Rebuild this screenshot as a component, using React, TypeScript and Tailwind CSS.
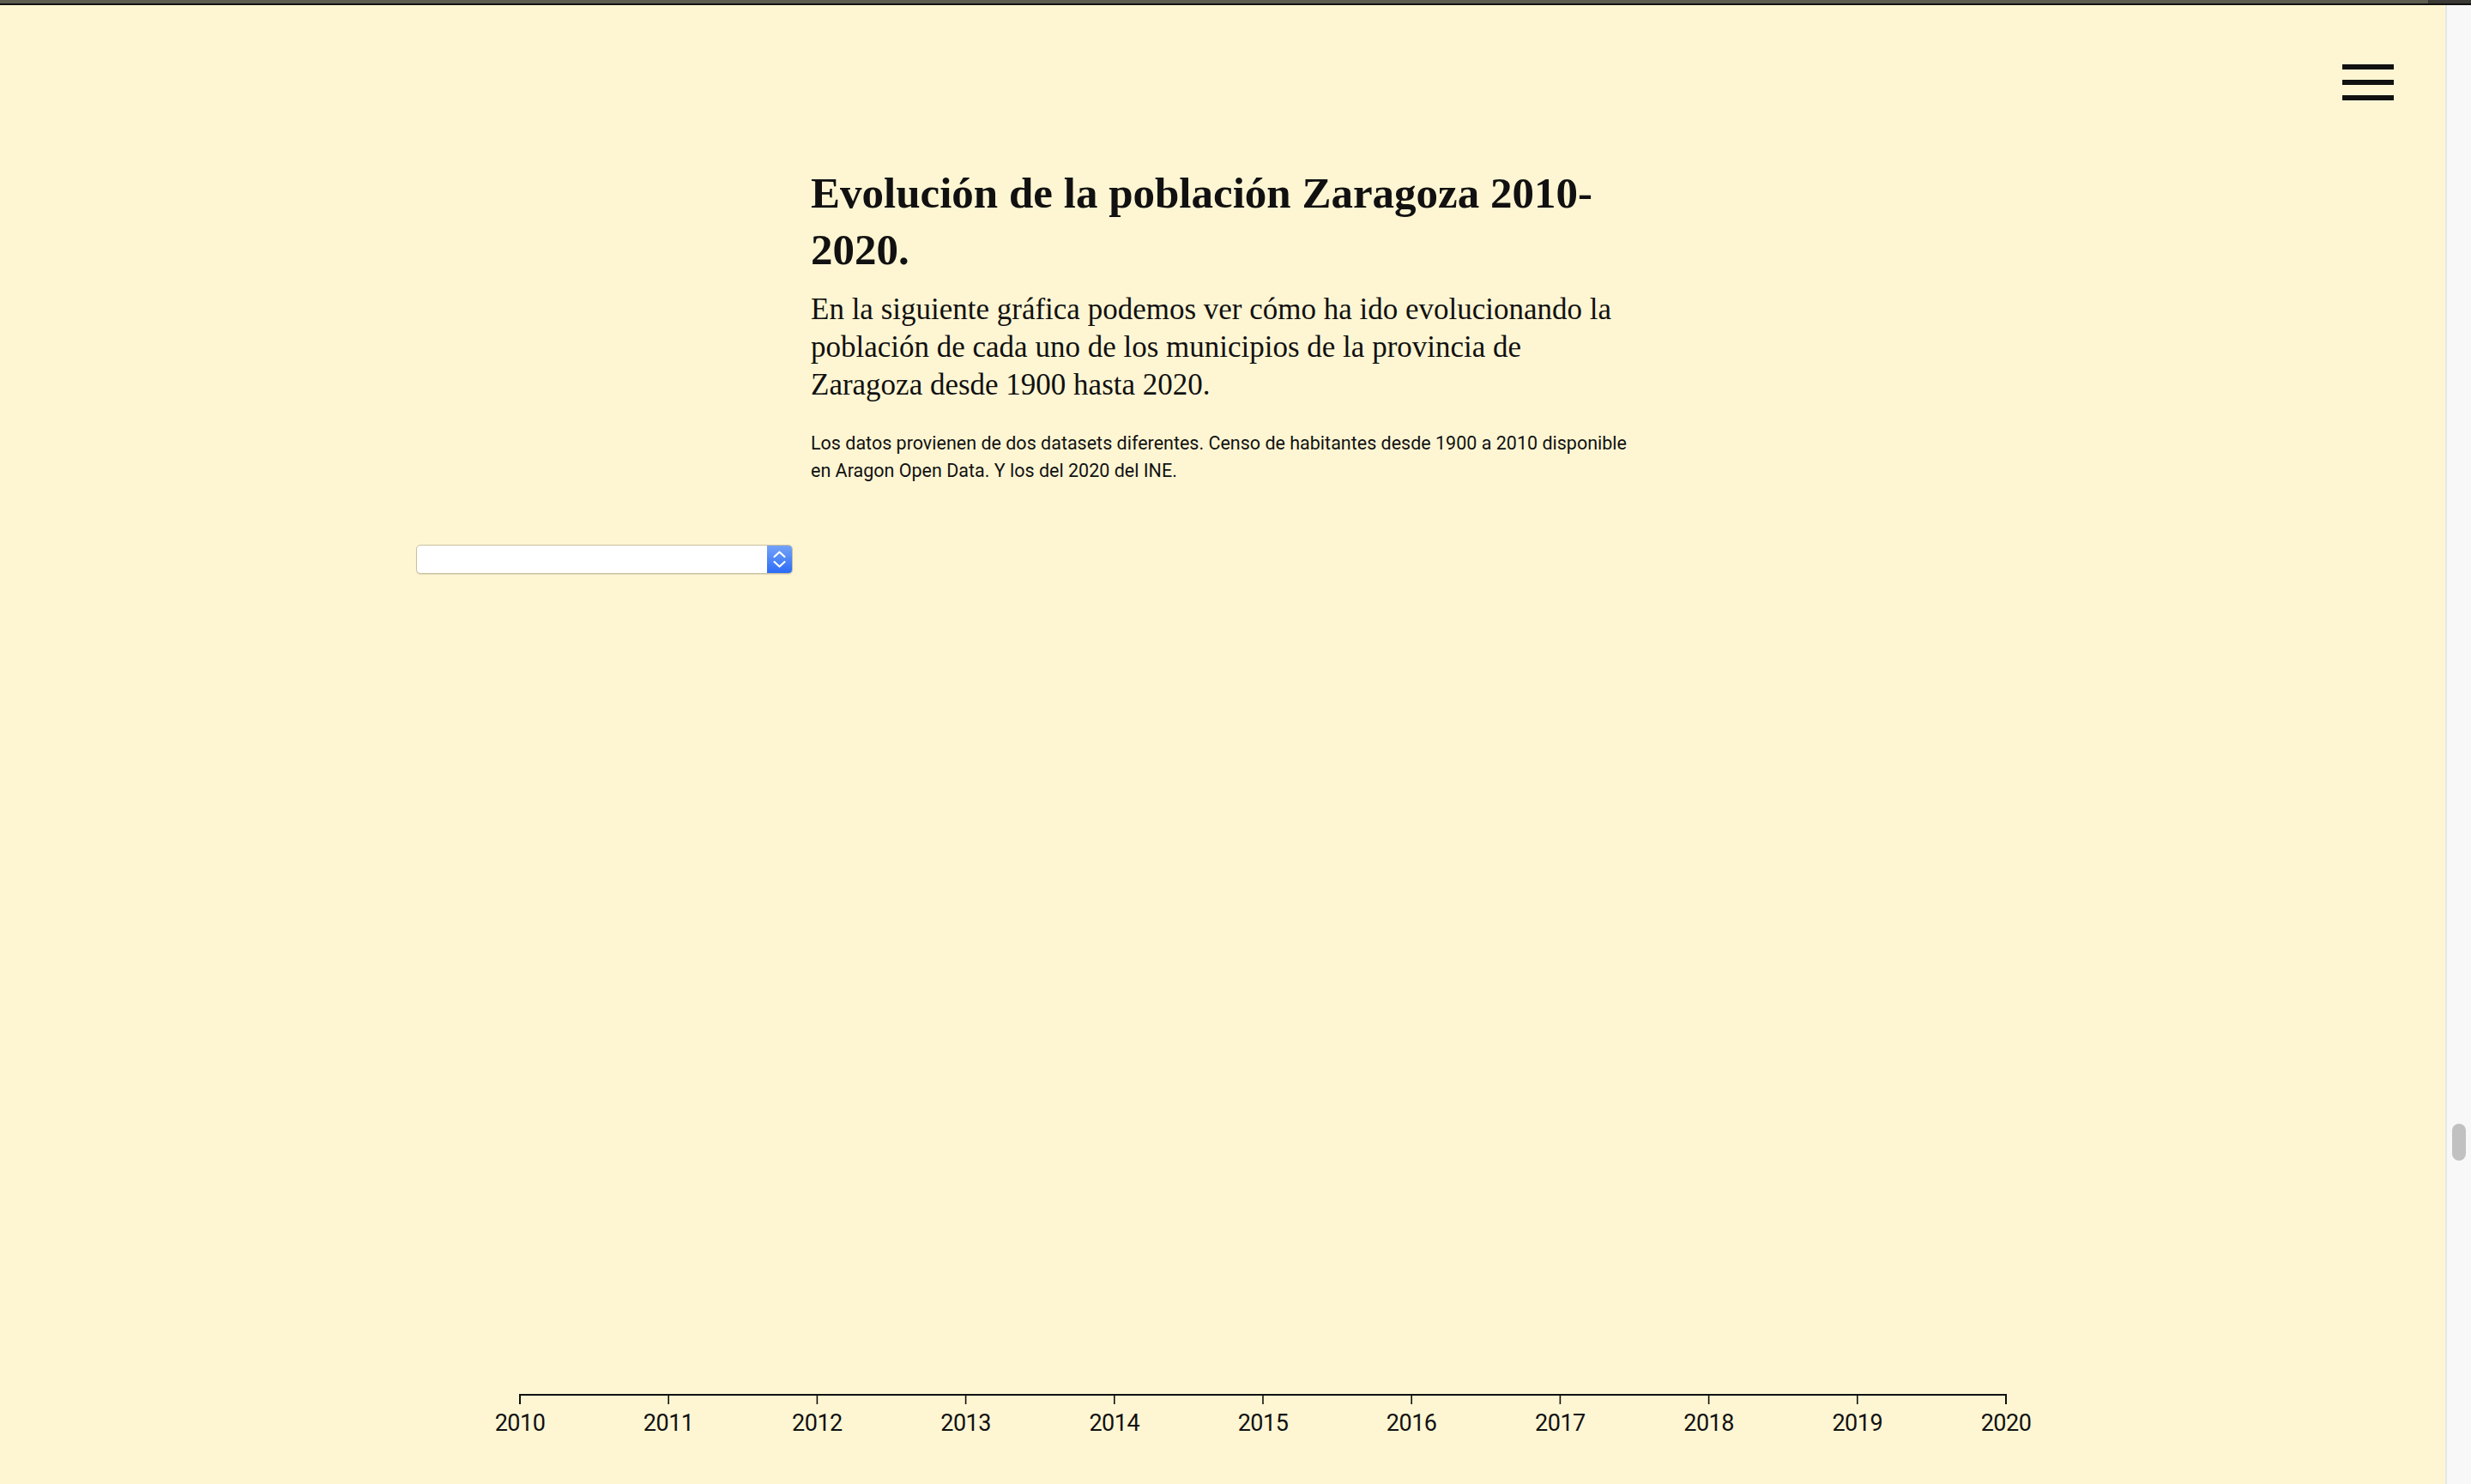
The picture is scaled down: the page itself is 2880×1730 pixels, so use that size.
import React from "react";

const years = [2010, 2011, 2012, 2013, 2014, 2015, 2016, 2017, 2018, 2019, 2020];

function YearAxis() {
  const x0 = 606;
  const x1 = 2338;
  const step = (x1 - x0) / (years.length - 1);
  const y = 946;
  return (
    <svg width={2850} height={1050} className="block">
      <path d={`M${x0},${y + 11}V${y}H${x1}V${y + 11}`} fill="none" stroke="#111" strokeWidth={2} />
      {years.map((yr, i) => {
        const x = x0 + i * step;
        return (
          <g key={yr}>
            <line x1={x} x2={x} y1={y} y2={y + 11} stroke="#111" strokeWidth={1.6} />
            <text
              x={x}
              y={y + 42}
              textAnchor="middle"
              fontSize={27}
              fill="#111"
              fontFamily="Roboto, sans-serif"
              style={{ letterSpacing: "-0.5px" }}
            >
              {yr}
            </text>
          </g>
        );
      })}
    </svg>
  );
}

function MunicipioSelect() {
  return (
    <div className="ml-[485px] flex h-[34px] w-[439px] rounded-[5px] border border-[#c9c1a1] bg-white shadow-[0_1px_1px_rgba(0,0,0,0.12)]">
      <div className="flex-1" />
      <div className="flex w-[29px] items-center justify-center rounded-r-[4px] bg-gradient-to-b from-[#74a2f7] to-[#2b6bf6]">
        <svg width="29" height="34" viewBox="0 0 29 34">
          <path d="M8.5 14 L14.5 8.5 L20.5 14" fill="none" stroke="#fff" strokeWidth={2.2} strokeLinecap="round" strokeLinejoin="round" />
          <path d="M8.5 20 L14.5 25.5 L20.5 20" fill="none" stroke="#fff" strokeWidth={2.2} strokeLinecap="round" strokeLinejoin="round" />
        </svg>
      </div>
    </div>
  );
}

export default function App() {
  return (
    <div className="flex h-[1730px] w-full flex-col overflow-hidden bg-[#fef6d3]">
      {/* window chrome */}
      <div className="flex h-[4px]">
        <div className="flex-1 bg-[#5f5c50]" />
        <div className="w-[50px] bg-[#3b3a36]" />
      </div>
      <div className="h-[2px] bg-[#111]" />

      <div className="flex flex-1">
        <main className="relative flex-1 bg-[#fef6d3] text-[#111]">
          {/* menu */}
          <button type="button" aria-label="menu" className="absolute right-[60px] top-[69px] flex w-[60px] flex-col gap-[12px]">
            <span className="block h-[6px] w-full bg-[#111]" />
            <span className="block h-[6px] w-full bg-[#111]" />
            <span className="block h-[6px] w-full bg-[#111]" />
          </button>

          <section className="mx-auto w-[960px] pt-[186px]">
            <h1 className="font-['Liberation_Serif',serif] text-[51px] font-bold leading-[66px]">
              Evolución de la población Zaragoza 2010-<wbr />2020.
            </h1>
            <p className="mt-[15px] w-[940px] font-['Liberation_Serif',serif] text-[35px] leading-[44px]">
              En la siguiente gráfica podemos ver cómo ha ido evolucionando la población de cada uno de los
              municipios de la provincia de Zaragoza desde 1900 hasta 2020.
            </p>
            <p className="mt-[30px] font-['Roboto',sans-serif] text-[21.5px] leading-[32px]">
              Los datos provienen de dos datasets diferentes. Censo de habitantes desde 1900 a 2010 disponible en
              Aragon Open Data. Y los del 2020 del INE.
            </p>
          </section>

          <div className="mt-[70px]">
            <MunicipioSelect />
          </div>

          <div className="mt-[11px]">
            <YearAxis />
          </div>
        </main>

        {/* scrollbar */}
        <div className="relative w-[30px] border-l-2 border-[#e6e6e6] bg-[#f8f8f8]">
          <div className="absolute left-[6px] top-[1304px] h-[43px] w-[16px] rounded-full bg-[#c1c1c1]" />
        </div>
      </div>
    </div>
  );
}
